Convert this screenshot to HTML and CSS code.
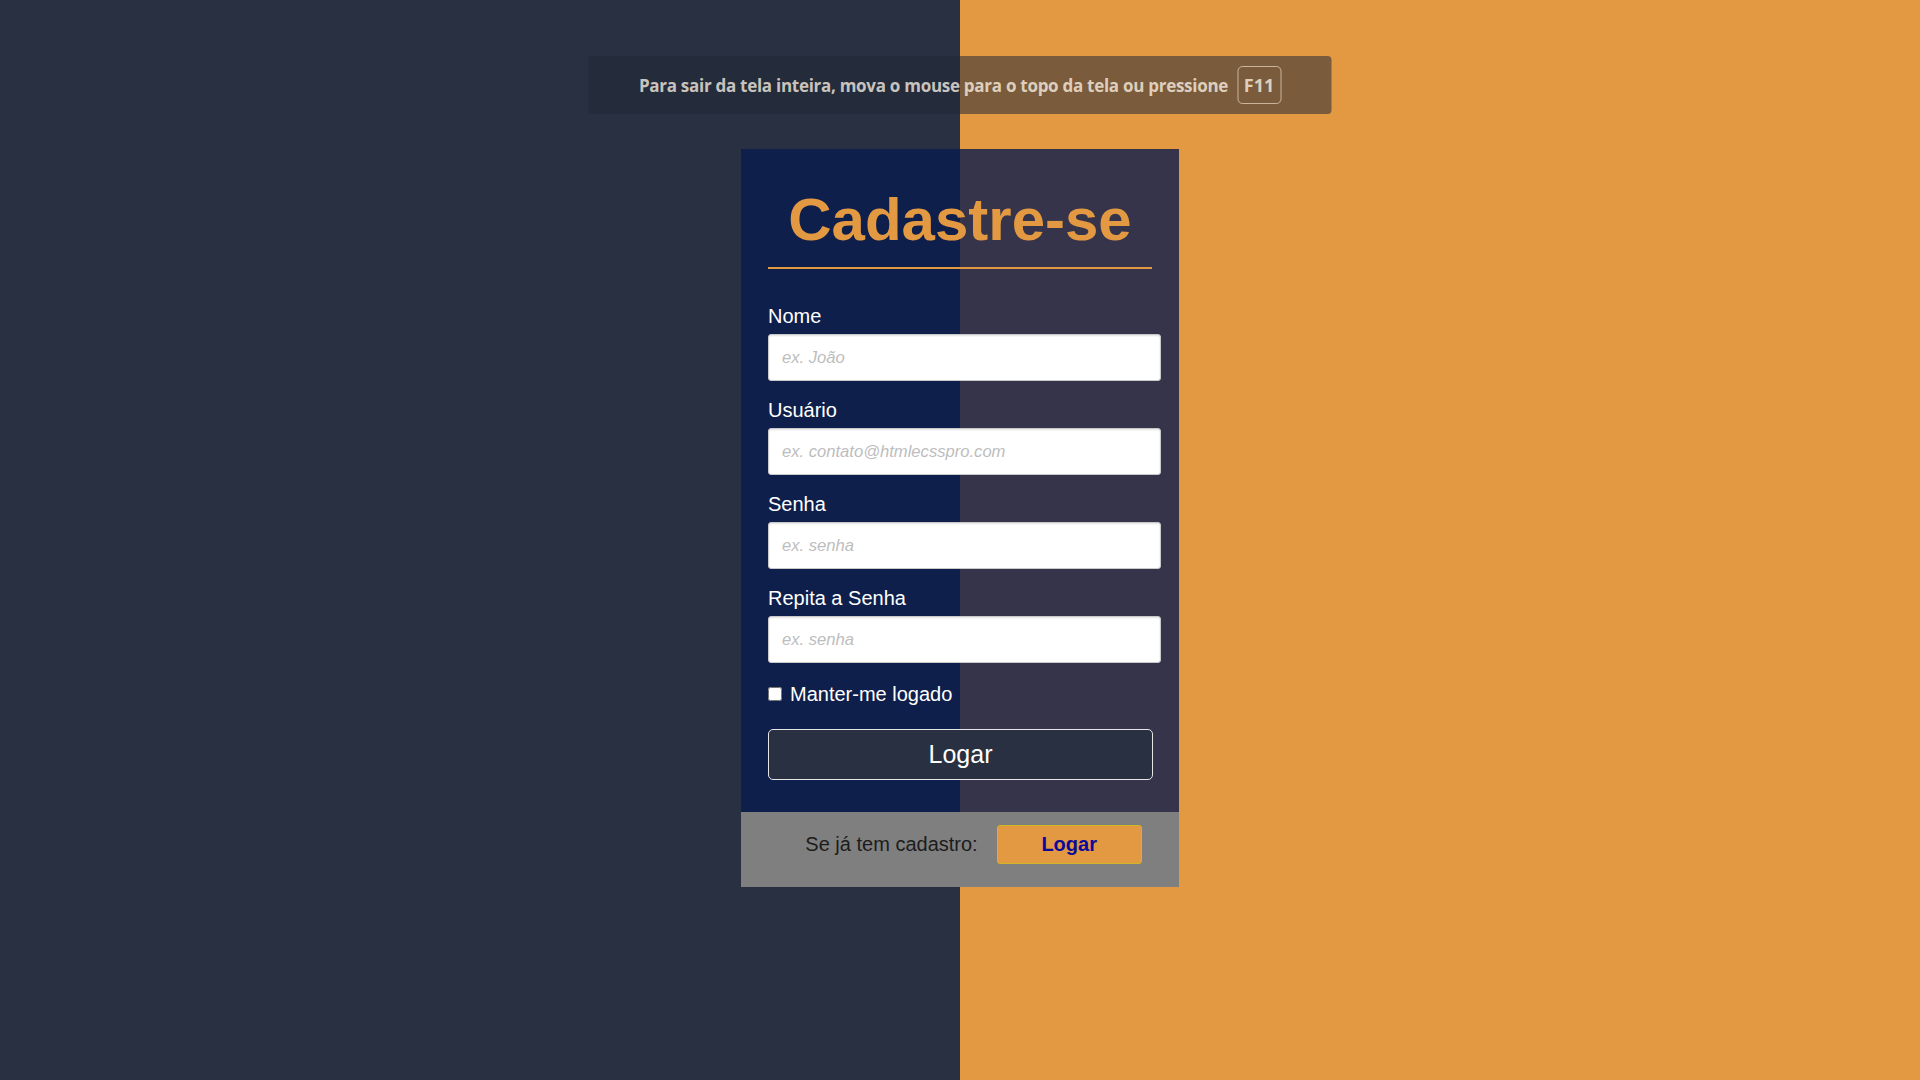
FILE: index.html
```html
<!DOCTYPE html>
<html lang="pt-BR">
<head>
<meta charset="utf-8">
<title>Cadastre-se</title>
<link rel="stylesheet" href="styles.css">
</head>
<body>
<div class="toast">
  <span class="toast-text">Para sair da tela inteira, mova o mouse para o topo da tela ou pressione</span>
  <span class="key">F11</span>
</div>

<main class="card">
  <form class="card-body">
    <h1 class="title">Cadastre-se</h1>

    <div class="field">
      <label class="label" for="nome">Nome</label>
      <input class="input" id="nome" type="text" placeholder="ex. João">
    </div>
    <div class="field">
      <label class="label" for="usuario">Usuário</label>
      <input class="input" id="usuario" type="text" placeholder="ex. contato@htmlecsspro.com">
    </div>
    <div class="field">
      <label class="label" for="senha">Senha</label>
      <input class="input" id="senha" type="password" placeholder="ex. senha">
    </div>
    <div class="field">
      <label class="label" for="senha2">Repita a Senha</label>
      <input class="input" id="senha2" type="password" placeholder="ex. senha">
    </div>

    <label class="remember">
      <input class="check" type="checkbox">
      <span>Manter-me logado</span>
    </label>

    <button class="btn-main" type="button">Logar</button>
  </form>

  <div class="card-foot">
    <span class="foot-text">Se já tem cadastro:</span>
    <button class="btn-small" type="button">Logar</button>
  </div>
</main>
</body>
</html>
```

FILE: styles.css
```css
* { box-sizing: border-box; }

html, body {
  margin: 0;
  padding: 0;
}

body {
  min-height: 1080px;
  background: linear-gradient(to right, #283041 0, #283041 50%, #e39842 50%, #e39842 100%);
  font-family: "Liberation Sans", Arial, sans-serif;
  padding-top: 149px;
}

/* fullscreen overlay toast */
.toast {
  position: absolute;
  top: 56px;
  left: 50%;
  transform: translateX(-50%);
  width: 743px;
  height: 58px;
  border-radius: 4px;
  background: rgba(34, 39, 54, 0.54);
  display: flex;
  align-items: center;
  justify-content: center;
  gap: 9px;
  font-family: "Open Sans", "Noto Sans", sans-serif;
  font-weight: 700;
  color: rgba(255, 246, 232, 0.76);
}

.toast-text {
  font-size: 17px;
  letter-spacing: -0.28px;
}

.key {
  display: flex;
  align-items: center;
  justify-content: center;
  width: 44px;
  height: 38px;
  border: 1px solid rgba(255, 240, 220, 0.6);
  border-radius: 5px;
  font-size: 18px;
}

/* card */
.card {
  width: 438px;
  margin: 0 auto;
}

.card-body {
  margin: 0;
  padding: 37px 27px 32px;
  background: rgba(9, 27, 78, 0.8);
}

.title {
  margin: 0 0 36px;
  padding-bottom: 14px;
  border-bottom: 2px solid #e39842;
  text-align: center;
  color: #e39842;
  font-size: 60px;
  font-weight: 700;
  line-height: 67px;
}

.field {
  display: flex;
  flex-direction: column;
  gap: 6px;
  margin-bottom: 18px;
}

.label {
  color: #ffffff;
  font-size: 20px;
  line-height: 23px;
}

.input {
  width: 393px;
  height: 47px;
  padding: 0 13px;
  border: 1px solid #c9c9c9;
  border-radius: 3px;
  background: #ffffff;
  box-shadow: inset 0 1px 2px rgba(0, 0, 0, 0.12);
  font-family: "Liberation Sans", Arial, sans-serif;
  font-size: 16.6px;
  color: #333;
}

.input::placeholder {
  color: #bdbdbd;
  font-style: italic;
}

.remember {
  display: flex;
  align-items: center;
  margin-top: 20px;
  color: #ffffff;
  font-size: 20px;
  line-height: 23px;
}

.check {
  width: 14px;
  height: 14px;
  margin: 0 8px 2px 0;
}

.btn-main {
  display: block;
  width: 385px;
  height: 51px;
  margin-top: 23px;
  border: 1px solid #e6e6e6;
  border-radius: 5px;
  background: #283041;
  color: #ffffff;
  font-family: "Liberation Sans", Arial, sans-serif;
  font-size: 25px;
}

.card-foot {
  display: flex;
  align-items: center;
  justify-content: center;
  gap: 19px;
  height: 75px;
  padding: 0 0 10px 27px;
  background: #7f7f7f;
}

.foot-text {
  color: #1c1c1c;
  font-size: 20px;
}

.btn-small {
  width: 145px;
  height: 39px;
  border: 1px solid #cdb722;
  border-radius: 3px;
  background: #e39842;
  color: #0b0b99;
  font-family: "Liberation Sans", Arial, sans-serif;
  font-size: 20px;
  font-weight: 700;
}
```
